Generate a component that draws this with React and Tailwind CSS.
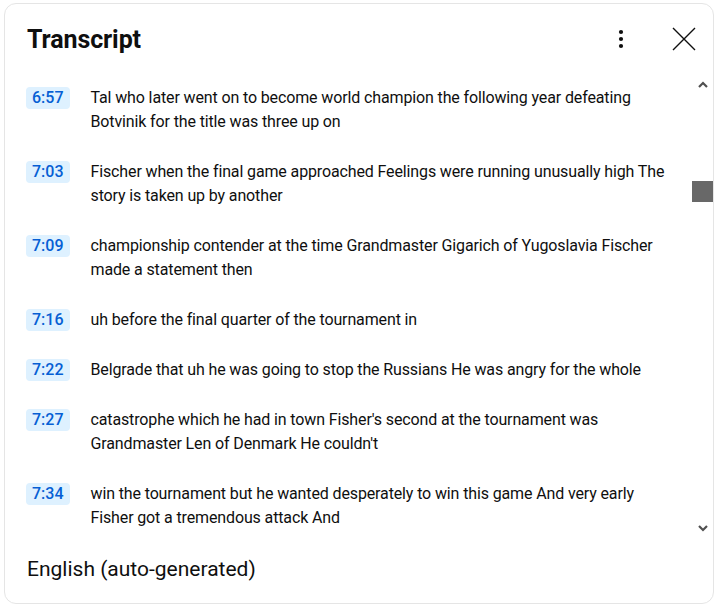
import React from "react";

const rows = [
  {
    time: "6:57",
    text: "Tal who later went on to become world champion the following year defeating Botvinik for the title was three up on",
  },
  {
    time: "7:03",
    text: "Fischer when the final game approached Feelings were running unusually high The story is taken up by another",
  },
  {
    time: "7:09",
    text: "championship contender at the time Grandmaster Gigarich of Yugoslavia Fischer made a statement then",
  },
  { time: "7:16", text: "uh before the final quarter of the tournament in" },
  {
    time: "7:22",
    text: "Belgrade that uh he was going to stop the Russians He was angry for the whole",
  },
  {
    time: "7:27",
    text: "catastrophe which he had in town Fisher's second at the tournament was Grandmaster Len of Denmark He couldn't",
  },
  {
    time: "7:34",
    text: "win the tournament but he wanted desperately to win this game And very early Fisher got a tremendous attack And",
  },
];

// one cue line: timestamp chip + caption text
const Cue = ({ time, text }) => (
  <div className="flex items-start py-[13px]">
    <span className="ml-[21px] mt-[1px] h-[22px] px-[6px] rounded-[4px] bg-[#def1ff] text-[#065fd4] text-[16px] leading-[22px] font-medium shrink-0">
      {time}
    </span>
    <p className="ml-[21px] w-[584px] text-[16px] leading-[24px] tracking-[-0.13px] text-[#0f0f0f]">
      {text}
    </p>
  </div>
);

const App = () => {
  return (
    <div className="pl-[4px] pt-[3px] bg-white" style={{ fontFamily: "Roboto, 'Liberation Sans', sans-serif" }}>
      <div className="w-[710px] h-[601px] rounded-[12px] border border-[#e5e5e5] bg-white flex flex-col overflow-hidden">
        {/* header */}
        <div className="h-[69px] flex items-center pl-[22px] pr-[16px]">
          <h1 className="text-[25px] font-bold text-[#0f0f0f] tracking-[-0.1px] flex-1 pt-[2px]">
            Transcript
          </h1>
          <button className="w-[24px] h-[24px] flex items-center justify-center mr-[38px]">
            <svg width="6" height="20" viewBox="0 0 6 20">
              <circle cx="3" cy="3" r="2.1" fill="#0f0f0f" />
              <circle cx="3" cy="10" r="2.1" fill="#0f0f0f" />
              <circle cx="3" cy="17" r="2.1" fill="#0f0f0f" />
            </svg>
          </button>
          <button className="w-[26px] h-[26px] flex items-center justify-center">
            <svg width="26" height="26" viewBox="0 0 26 26">
              <path d="M2 2 L24 24 M24 2 L2 24" stroke="#0f0f0f" strokeWidth="1.4" fill="none" />
            </svg>
          </button>
        </div>

        {/* cue list with scrollbar */}
        <div className="flex h-[472px]">
          <div className="flex-1 overflow-hidden">
            {rows.map((r) => (
              <Cue key={r.time} time={r.time} text={r.text} />
            ))}
          </div>
          <div className="w-[21px] flex flex-col items-center">
            <svg width="10" height="7" viewBox="0 0 10 7" className="mt-[8px]">
              <path d="M1 6 L5 2 L9 6" stroke="#505050" strokeWidth="2.2" fill="none" />
            </svg>
            <div className="w-[21px] h-[21px] bg-[#686868] mt-[93px]" />
            <div className="flex-1" />
            <svg width="10" height="7" viewBox="0 0 10 7" className="mb-[13px]">
              <path d="M1 1 L5 5 L9 1" stroke="#505050" strokeWidth="2.2" fill="none" />
            </svg>
          </div>
        </div>

        {/* footer */}
        <div className="flex-1 flex items-center pl-[22px] pb-[8px]">
          <span className="text-[21px] text-[#0f0f0f]">English (auto-generated)</span>
        </div>
      </div>
    </div>
  );
};

export default App;
